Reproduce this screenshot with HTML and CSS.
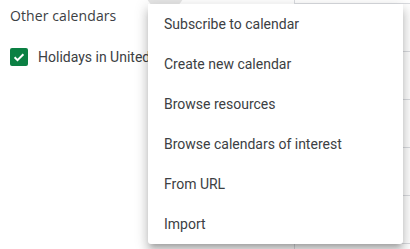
FILE: index.html
```html
<!DOCTYPE html>
<html>
<head>
<meta charset="utf-8">
<link rel="stylesheet" href="styles.css">
</head>
<body>
<div class="app">
  <aside class="sidebar">
    <span class="hover-circle"></span>
    <div class="section-head">Other calendars</div>
    <div class="cal-row">
      <span class="checkbox">
        <svg width="18" height="18" viewBox="0 0 18 18"><path d="M4.6 9.3l2.9 2.9 5.9-5.9" fill="none" stroke="#fff" stroke-width="2"/></svg>
      </span>
      <span class="cal-name">Holidays in United States</span>
    </div>
  </aside>
  <div class="times">
    <div class="time">6 PM</div>
    <div class="time">7 PM</div>
    <div class="time">8 PM</div>
    <div class="time">9 PM</div>
    <div class="time">10 PM</div>
    <div class="time">11 PM</div>
  </div>
  <div class="grid">
    <div class="hour"></div>
    <div class="hour"></div>
    <div class="hour"></div>
    <div class="hour"></div>
    <div class="hour"></div>
    <div class="hour"></div>
  </div>
</div>
<ul class="menu">
  <li class="item">Subscribe to calendar</li>
  <li class="item">Create new calendar</li>
  <li class="item">Browse resources</li>
  <li class="item">Browse calendars of interest</li>
  <li class="item">From URL</li>
  <li class="item">Import</li>
</ul>
</body>
</html>
```
FILE: styles.css
```css
html, body {
  margin: 0;
  padding: 0;
  background: #fff;
}
body {
  width: 410px;
  height: 249px;
  overflow: hidden;
  position: relative;
  font-family: Roboto, "Liberation Sans", Arial, sans-serif;
  color: #3c4043;
}
.app {
  display: flex;
  height: 249px;
}
.sidebar {
  position: relative;
  width: 250px;
  flex: none;
  padding: 6px 0 0 10px;
  box-sizing: border-box;
}
.hover-circle {
  position: absolute;
  left: 145px;
  top: -30px;
  width: 40px;
  height: 40px;
  border-radius: 50%;
  background: #e6e6e6;
}
.section-head {
  font-family: "Open Sans", Roboto, sans-serif;
  font-size: 14px;
  font-weight: 500;
  letter-spacing: 0.1px;
  line-height: 20px;
  height: 20px;
  color: #3c4043;
}
.cal-row {
  display: flex;
  align-items: center;
  gap: 10px;
  margin-top: 19px;
  height: 24px;
  white-space: nowrap;
}
.checkbox {
  width: 18px;
  height: 18px;
  border-radius: 2px;
  background: #0b8043;
  flex: none;
  display: flex;
}
.cal-name {
  font-size: 14px;
  line-height: 20px;
}
.times {
  width: 44px;
  flex: none;
  display: flex;
  flex-direction: column;
  margin-top: -12px;
}
.time {
  height: 48px;
  font-size: 10px;
  line-height: 12px;
  color: #70757a;
  text-align: right;
  padding-right: 16px;
  box-sizing: border-box;
  white-space: nowrap;
}
.grid {
  flex: 1;
  border-left: 1px solid #dadce0;
  display: flex;
  flex-direction: column;
  margin-top: -44px;
}
.hour {
  height: 48px;
  flex: none;
  border-bottom: 1px solid #dadce0;
  box-sizing: border-box;
}
.menu {
  position: absolute;
  left: 148px;
  top: 4px;
  width: 255px;
  margin: 0;
  padding: 0;
  list-style: none;
  background: #fff;
  border-radius: 0 0 3px 3px;
  box-shadow: 0 5px 5px -3px rgba(0,0,0,.2), 0 8px 10px 1px rgba(0,0,0,.14), 0 3px 14px 2px rgba(0,0,0,.12);
}
.item {
  height: 40px;
  line-height: 40px;
  padding-left: 16px;
  font-size: 14px;
  color: #3c4043;
  white-space: nowrap;
}
```
